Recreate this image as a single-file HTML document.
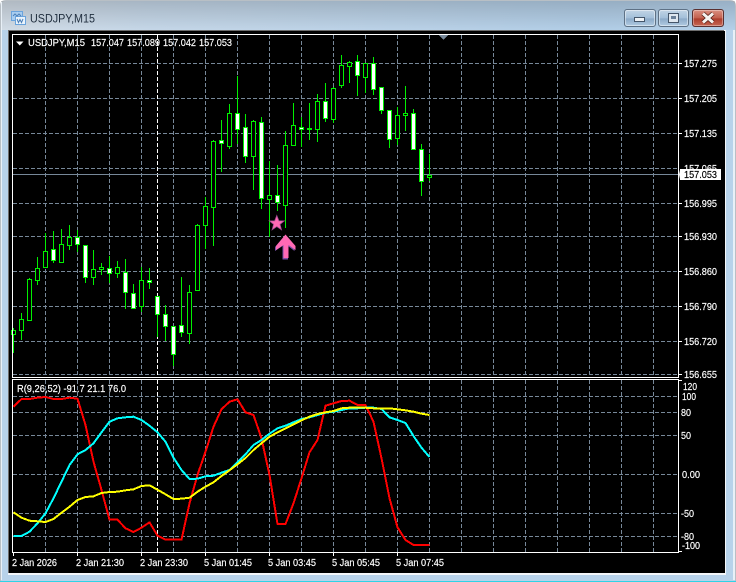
<!DOCTYPE html>
<html><head><meta charset="utf-8"><title>USDJPY,M15</title>
<style>
html,body{margin:0;padding:0;width:736px;height:582px;overflow:hidden;background:#fff}
svg{position:absolute;left:0;top:0;display:block}
text{font-family:"Liberation Sans",sans-serif;font-size:10.5px;fill:#fff;stroke:#fff;stroke-width:.18px}
.c{shape-rendering:crispEdges}
</style></head><body>
<svg width="736" height="582" viewBox="0 0 736 582" xmlns="http://www.w3.org/2000/svg">
<defs>
<linearGradient id="tv" x1="0" y1="0" x2="0" y2="1"><stop offset="0" stop-color="#000" stop-opacity=".16"/><stop offset="1" stop-color="#000" stop-opacity="0"/></linearGradient>
<linearGradient id="th" x1="0" y1="0" x2="1" y2="0"><stop offset="0" stop-color="#d3dde7"/><stop offset=".2" stop-color="#c6d8e9"/><stop offset=".8" stop-color="#b3cfe8"/><stop offset="1" stop-color="#b5d1ea"/></linearGradient>
<linearGradient id="b1" x1="0" y1="0" x2="0" y2="1"><stop offset="0" stop-color="#c3d5e6"/><stop offset=".5" stop-color="#a3bfd9"/><stop offset=".55" stop-color="#8caac8"/><stop offset="1" stop-color="#b3cde4"/></linearGradient>
<linearGradient id="b2" x1="0" y1="0" x2="0" y2="1"><stop offset="0" stop-color="#dc9384"/><stop offset=".5" stop-color="#c2604e"/><stop offset=".55" stop-color="#ad3d2c"/><stop offset="1" stop-color="#c86a56"/></linearGradient>
</defs>
<!-- window -->
<path d="M1 582V6Q1 1 6 1H730Q735 1 735 6V582Z" fill="url(#th)"/>
<rect x="1" y="1" width="734" height="30" fill="url(#tv)"/>
<rect x="1" y="30" width="734" height="551" fill="#b7d2ea" class="c"/>
<path d="M.5 582V6Q.5 .5 6 .5H730Q735.5 .5 735.5 6V582" fill="none" stroke="#7d8a96" stroke-width="1" opacity=".55"/>
<rect x="1" y="2" width="1" height="578" fill="#e8f0f7" class="c"/>
<rect x="733" y="30" width="2" height="550" fill="#e8f0f7" class="c"/>
<rect x="8" y="30" width="718" height="545" fill="#f3f6f9" class="c"/>
<rect x="8" y="30" width="716" height="1" fill="#6d6d6d" class="c"/>
<rect x="8" y="30" width="1" height="543" fill="#6d6d6d" class="c"/>
<rect x="9" y="31" width="716" height="542" fill="#000" class="c"/>
<rect x="0" y="581" width="736" height="1" fill="#2fd3e6" class="c"/>

<!-- title -->
<g class="c">
<rect x="11.500" y="11.500" width="11" height="9" fill="#a8cdf0" stroke="#6aa3dc"/>
<rect x="15.500" y="16.500" width="10" height="8" fill="#e9f3fc" stroke="#6aa3dc"/>
</g>
<path d="M13 16l2-2 2 2 2-2 2 2M17 19l1.500 3.500 1.500-3 1.500 3 1.500-3.500" fill="none" stroke="#4b7fb8" stroke-width="1"/>
<text x="30" y="22.500" textLength="65" lengthAdjust="spacingAndGlyphs" style="font-size:12px;fill:#1f2d3d;stroke:none">USDJPY,M15</text>

<!-- buttons -->
<rect x="624.500" y="9.500" width="31" height="17" rx="2.500" fill="url(#b1)" stroke="#5e7185"/>
<rect x="625.500" y="10.500" width="29" height="15" rx="2" fill="none" stroke="#fff" stroke-opacity=".45"/>
<rect x="658.500" y="9.500" width="30" height="17" rx="2.500" fill="url(#b1)" stroke="#5e7185"/>
<rect x="659.500" y="10.500" width="28" height="15" rx="2" fill="none" stroke="#fff" stroke-opacity=".45"/>
<rect x="692.500" y="9.500" width="31" height="17" rx="2.500" fill="url(#b2)" stroke="#5a3030"/>
<rect x="693.500" y="10.500" width="29" height="15" rx="2" fill="none" stroke="#fff" stroke-opacity=".35"/>
<g class="c">
<rect x="634.500" y="17.500" width="10" height="4" fill="#eef2f6" stroke="#45566a"/>
<rect x="668.500" y="13.500" width="10" height="9" fill="#dfe7ef" stroke="#45566a"/>
<rect x="671" y="16" width="5" height="3" fill="#6b8099"/>
</g>
<path d="M703 13.500L713 22.500M713 13.500L703 22.500" stroke="#4b1a12" stroke-width="4.500"/>
<path d="M703 13.500L713 22.500M713 13.500L703 22.500" stroke="#f6f3f0" stroke-width="3"/>

<!-- grid -->
<g class="c" fill="none" stroke-width="1">
<path stroke="#778899" stroke-dasharray="4 2" d="M13 63.500H678M13 98.500H678M13 133.500H678M13 168.500H678M13 203.500H678M13 236.500H678M13 271.500H678M13 306.500H678M13 341.500H678M13 374.500H678M13 396.500H678M13 412.500H678M13 435.500H678M13 474.500H678M13 513.500H678M13 536.500H678"/>
<path stroke="#778899" stroke-dasharray="4 2" d="M45.500 35V377M77.500 35V377M109.500 35V377M141.500 35V377M173.500 35V377M205.500 35V377M237.500 35V377M269.500 35V377M301.500 35V377M333.500 35V377M365.500 35V377M397.500 35V377M429.500 35V377M461.500 35V377M493.500 35V377M525.500 35V377M557.500 35V377M589.500 35V377M621.500 35V377M653.500 35V377M45.500 380V552M77.500 380V552M109.500 380V552M141.500 380V552M173.500 380V552M205.500 380V552M237.500 380V552M269.500 380V552M301.500 380V552M333.500 380V552M365.500 380V552M397.500 380V552M429.500 380V552M461.500 380V552M493.500 380V552M525.500 380V552M557.500 380V552M589.500 380V552M621.500 380V552M653.500 380V552"/>
<path stroke="#fff" stroke-dasharray="4 2" d="M157.500 35V377M157.500 380V552"/>
<path stroke="#778899" d="M13 174.500H678"/>
</g>
<path d="M439 35H448L443.500 40Z" fill="#778899" class="c"/>

<!-- wicks -->
<path class="c" fill="none" stroke="#00f000" d="M13.500 328V353M21.500 313V340M29.500 278V321M37.500 257V285M45.500 233V267M53.500 231V263M61.500 229V263M69.500 225V250M77.500 230V252M85.500 245V283M93.500 250V285M101.500 263V275M109.500 256V283M117.500 261V278M125.500 259V309M133.500 284V309M141.500 267V312M149.500 268V289M157.500 296V337M165.500 305V341M173.500 326V366M181.500 277V337M189.500 285V344M197.500 224V290M205.500 197V249M213.500 140V246M221.500 120V172M229.500 104V149M237.500 76V144M245.500 114V163M253.500 120V190M261.500 117V209M269.500 161V237M277.500 165V211M285.500 131V228M293.500 103V145M301.500 117V147M309.500 103V140M317.500 94V142M325.500 83V122M333.500 87V123M341.500 55V88M349.500 61V83M357.500 55V96M365.500 63V93M373.500 57V95M381.500 87V114M389.500 110V148M397.500 107V145M405.500 86V131M413.500 109V150M421.500 144V196M429.500 154V181"/>
<!-- hollow bodies -->
<path class="c" fill="#000" stroke="#00f000" d="M11.500 330.500h4v4h-4zM19.500 319.500h4v11h-4zM27.500 279.500h4v41h-4zM35.500 268.500h4v12h-4zM43.500 251.500h4v16h-4zM59.500 244.500h4v18h-4zM67.500 237.500h4v8h-4zM91.500 269.500h4v8h-4zM99.500 267.500h4v2h-4zM115.500 267.500h4v6h-4zM139.500 280.500h4v26h-4zM187.500 292.500h4v41h-4zM195.500 225.500h4v65h-4zM203.500 206.500h4v19h-4zM211.500 141.500h4v66h-4zM227.500 113.500h4v33h-4zM251.500 121.500h4v35h-4zM267.500 195.500h4v4h-4zM283.500 145.500h4v60h-4zM291.500 125.500h4v20h-4zM307.500 128.500h4v1h-4zM315.500 101.500h4v28h-4zM331.500 88.500h4v31h-4zM339.500 65.500h4v20h-4zM347.500 62.500h4v4h-4zM363.500 63.500h4v14h-4zM395.500 115.500h4v23h-4zM403.500 113.500h4v2h-4zM427.500 175.500h4v2h-4z"/>
<!-- white bodies -->
<path class="c" fill="#fff" stroke="#00f000" d="M51.500 249.500h4v11h-4zM75.500 237.500h4v7h-4zM83.500 245.500h4v32h-4zM107.500 268.500h4v5h-4zM123.500 272.500h4v20h-4zM131.500 293.500h4v15h-4zM147.500 280.500h4v2h-4zM155.500 296.500h4v18h-4zM163.500 314.500h4v12h-4zM171.500 326.500h4v28h-4zM179.500 325.500h4v7h-4zM219.500 140.500h4v3h-4zM235.500 113.500h4v16h-4zM243.500 127.500h4v29h-4zM259.500 122.500h4v76h-4zM275.500 195.500h4v7h-4zM299.500 127.500h4v2h-4zM323.500 101.500h4v17h-4zM355.500 61.500h4v14h-4zM371.500 63.500h4v26h-4zM379.500 87.500h4v23h-4zM387.500 110.500h4v29h-4zM411.500 113.500h4v36h-4zM419.500 149.500h4v32h-4z"/>

<!-- star & arrow -->
<path d="M276.800 215.500L278.900 220.800 284.300 220.900 280 224.300 281.500 229.800 276.800 226.600 272.100 229.800 273.600 224.300 269.300 220.900 274.700 220.800Z" fill="#ff69b4" stroke="#a04a90" stroke-width=".8"/>
<path d="M285 235.500L294.500 247V251L288 246V259.500H282.500V246L275 251V247Z" fill="#7b4fa8"/>
<path d="M285.500 234.500L295.500 246V250L288.500 245V258H283.500V245L276 250V246Z" fill="#ff69b4"/>

<!-- indicator lines -->
<g class="c" fill="none" stroke-width="2" stroke-linejoin="round">
<polyline stroke="#ff0000" points="13.500,406.700 21.500,399 29.500,399 37.500,397.700 45.500,397 53.500,399 61.500,399 69.500,397.700 77.500,398.700 85.500,425 93.500,461.700 101.500,490 109.500,519.700 117.500,519.700 125.500,528.300 133.500,532 141.500,527.700 149.500,522.300 157.500,535.700 165.500,539.700 173.500,539.700 181.500,539.700 189.500,503.300 197.500,475 205.500,451.700 213.500,426.700 221.500,409.300 229.500,401.700 237.500,399.300 245.500,412.300 253.500,415 261.500,438.300 269.500,475 277.500,524 285.500,524 293.500,503.300 301.500,478.300 309.500,452.300 317.500,440 325.500,405.700 333.500,403.300 341.500,401 349.500,400.700 357.500,405 365.500,405 373.500,421.700 381.500,458.300 389.500,498.300 397.500,527.300 405.500,540 413.500,545 421.500,545 429.500,545"/>
<polyline stroke="#00ffff" points="13.500,536 21.500,536 29.500,531.700 37.500,523.300 45.500,513.300 53.500,498.300 61.500,481.700 69.500,465 77.500,454.300 85.500,450 93.500,443.300 101.500,432.300 109.500,421.700 117.500,418.300 125.500,417.300 133.500,416.700 141.500,420 149.500,425.700 157.500,432.300 165.500,441.700 173.500,457.700 181.500,470 189.500,479 197.500,478.700 205.500,476.300 213.500,475.700 221.500,472.700 229.500,470 237.500,462.300 245.500,454.300 253.500,445 261.500,440 269.500,433.700 277.500,428.300 285.500,425.700 293.500,422.300 301.500,419 309.500,417.300 317.500,415 325.500,412.700 333.500,411.700 341.500,410 349.500,408.300 357.500,408.300 365.500,407.700 373.500,407.700 381.500,409 389.500,417.300 397.500,420 405.500,423 413.500,436 421.500,447.700 429.500,457"/>
<polyline stroke="#ffff00" points="13.500,512.300 21.500,517.700 29.500,520.700 37.500,521.300 45.500,522 53.500,519 61.500,512.700 69.500,506.700 77.500,500 85.500,497 93.500,496.300 101.500,493 109.500,492 117.500,491.700 125.500,490.300 133.500,489.300 141.500,486 149.500,485.300 157.500,489.700 165.500,494.300 173.500,499 181.500,498.700 189.500,497.700 197.500,491.700 205.500,486.700 213.500,482.300 221.500,476 229.500,470.300 237.500,464.300 245.500,458 253.500,450 261.500,443.300 269.500,436.700 277.500,432.300 285.500,428.300 293.500,424.300 301.500,420.300 309.500,416.700 317.500,414 325.500,412.300 333.500,411 341.500,408.300 349.500,407.700 357.500,407.700 365.500,407.700 373.500,408.300 381.500,408.300 389.500,408.300 397.500,409.300 405.500,410.300 413.500,411.700 421.500,413.700 429.500,415"/>
</g>

<!-- frames -->
<g class="c" fill="none" stroke="#fff">
<path d="M12.500 34.500H678.500V377.500H12.500ZM12.500 379.500H678.500V552.500H12.500Z"/>
<path d="M679 63.500h3M679 98.500h3M679 133.500h3M679 203.500h3M679 236.500h3M679 271.500h3M679 306.500h3M679 341.500h3M679 374.500h3M679 380.500h3M679 551.500h3M13.500 553v3M77.500 553v3M141.500 553v3M205.500 553v3M269.500 553v3M333.500 553v3M397.500 553v3"/>
</g>

<!-- chart header -->
<path d="M16 41.500H23.500L19.800 45.500Z" fill="#fff"/>
<text x="28" y="46" textLength="57" lengthAdjust="spacingAndGlyphs">USDJPY,M15</text>
<text x="91" y="46" textLength="33" lengthAdjust="spacingAndGlyphs">157.047</text>
<text x="127" y="46" textLength="33" lengthAdjust="spacingAndGlyphs">157.089</text>
<text x="163" y="46" textLength="33" lengthAdjust="spacingAndGlyphs">157.042</text>
<text x="199" y="46" textLength="33" lengthAdjust="spacingAndGlyphs">157.053</text>
<text x="17" y="392" textLength="109" lengthAdjust="spacingAndGlyphs">R(9,26,52) -91.7 21.1 76.0</text>

<!-- price scale -->
<text x="684" y="67" textLength="33" lengthAdjust="spacingAndGlyphs">157.275</text>
<text x="684" y="102" textLength="33" lengthAdjust="spacingAndGlyphs">157.205</text>
<text x="684" y="137" textLength="33" lengthAdjust="spacingAndGlyphs">157.135</text>
<text x="684" y="172" textLength="33" lengthAdjust="spacingAndGlyphs">157.065</text>
<rect x="680" y="169" width="41" height="11" fill="#fff" class="c"/>
<path d="M679 170V179L680 174.500Z" fill="#fff"/>
<text x="684" y="178" textLength="33" lengthAdjust="spacingAndGlyphs" style="fill:#000;stroke:#000">157.053</text>
<text x="684" y="207" textLength="33" lengthAdjust="spacingAndGlyphs">156.995</text>
<text x="684" y="240" textLength="33" lengthAdjust="spacingAndGlyphs">156.930</text>
<text x="684" y="275" textLength="33" lengthAdjust="spacingAndGlyphs">156.860</text>
<text x="684" y="310" textLength="33" lengthAdjust="spacingAndGlyphs">156.790</text>
<text x="684" y="345" textLength="33" lengthAdjust="spacingAndGlyphs">156.720</text>
<text x="684" y="378" textLength="33" lengthAdjust="spacingAndGlyphs">156.655</text>

<!-- sub scale -->
<text x="683" y="390" textLength="14" lengthAdjust="spacingAndGlyphs">120</text>
<text x="682" y="400" textLength="14" lengthAdjust="spacingAndGlyphs">100</text>
<text x="681" y="416" textLength="10" lengthAdjust="spacingAndGlyphs">80</text>
<text x="681" y="439" textLength="10" lengthAdjust="spacingAndGlyphs">50</text>
<text x="682" y="478" textLength="18" lengthAdjust="spacingAndGlyphs">0.00</text>
<text x="681" y="517" textLength="13" lengthAdjust="spacingAndGlyphs">-50</text>
<text x="681" y="540" textLength="13" lengthAdjust="spacingAndGlyphs">-80</text>
<text x="682" y="549" textLength="18" lengthAdjust="spacingAndGlyphs">-100</text>

<!-- time scale -->
<text x="12" y="566" textLength="45" lengthAdjust="spacingAndGlyphs">2 Jan 2026</text>
<text x="76" y="566" textLength="48" lengthAdjust="spacingAndGlyphs">2 Jan 21:30</text>
<text x="140" y="566" textLength="48" lengthAdjust="spacingAndGlyphs">2 Jan 23:30</text>
<text x="204" y="566" textLength="48" lengthAdjust="spacingAndGlyphs">5 Jan 01:45</text>
<text x="268" y="566" textLength="48" lengthAdjust="spacingAndGlyphs">5 Jan 03:45</text>
<text x="332" y="566" textLength="48" lengthAdjust="spacingAndGlyphs">5 Jan 05:45</text>
<text x="396" y="566" textLength="48" lengthAdjust="spacingAndGlyphs">5 Jan 07:45</text>
</svg>
</body></html>
